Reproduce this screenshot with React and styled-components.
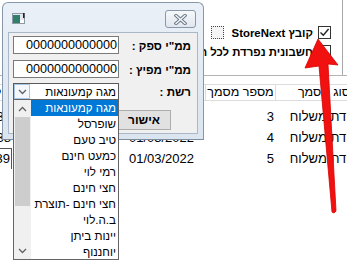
import React from 'react';
import styled, { createGlobalStyle } from 'styled-components';

const GlobalStyle = createGlobalStyle`
  html, body { margin: 0; padding: 0; background: #fff; overflow: hidden; }
  body { font-family: "Liberation Sans", Arial, sans-serif; color: #000; }
`;

const Desktop = styled.div`
  position: relative;
  width: 347px;
  height: 264px;
  overflow: hidden;
  background: #fff;
`;

/* ---------- background window ---------- */
const BgWindow = styled.div`
  direction: rtl;
  width: 347px;
  height: 264px;
`;

const TopArea = styled.div`
  height: 75px;
  border-bottom: 1px solid #b4b4b4;
`;

const OptionsPanel = styled.div`
  box-sizing: border-box;
  height: 75px;
  margin-right: 4px;
  border-right: 1px solid #a8a8a8;
  padding: 26px 11px 0 0;
  display: flex;
  flex-direction: column;
  gap: 6px;
`;

const CheckRow = styled.div`
  display: flex;
  align-items: center;
  height: 13px;
  white-space: nowrap;
`;

const CheckBox = styled.div`
  box-sizing: border-box;
  width: 13px;
  height: 13px;
  flex: none;
  border: 1px ${p => (p.$dotted ? 'dotted #444' : 'solid #333')};
  background: ${p => (p.$dotted ? '#f4f4f4' : '#fff')};
  display: flex;
  align-items: center;
  justify-content: center;
`;

const CheckLabel = styled.span`
  font-weight: bold;
  font-size: 11.4px;
  margin-right: 5px;
  margin-left: 8px;
`;

const Table = styled.div`
  width: 400px;
  margin-top: 8px;
  margin-right: -25px;
  font-size: 13px;
`;

const Grid = styled.div`
  display: grid;
  grid-template-columns: 97px 70px 193px 40px;
`;

const HeadRow = styled(Grid)`
  height: 17px;
  border-top: 1px solid #dcdcdc;
  border-bottom: 1px solid #dcdcdc;
  box-sizing: border-box;
`;

const HeadCell = styled.div`
  text-align: center;
  line-height: 15px;
  font-size: 12.5px;
  border-left: 1px solid #dcdcdc;
  white-space: nowrap;
  overflow: hidden;
`;

const Body = styled.div`
  margin-top: 5px;
`;

const Row = styled(Grid)`
  height: 21px;
`;

const Cell = styled.div`
  box-sizing: border-box;
  padding-right: ${p => p.$pad || 2}px;
  white-space: nowrap;
  overflow: hidden;
  border-top: ${p => (p.$focus ? '1px solid #555' : 'none')};
  border-right: ${p => (p.$focus ? '1px solid #555' : 'none')};
  line-height: ${p => (p.$focus ? '20px' : '21px')};
`;

/* ---------- dialog ---------- */
const Dialog = styled.div`
  position: absolute;
  left: 2px;
  top: 2px;
  width: 202px;
  height: 138px;
  box-sizing: border-box;
  border: 1px solid #8797aa;
  border-bottom-color: #7d8da0;
  border-radius: 6px 6px 0 0;
  background: linear-gradient(#eaf0f7, #dbe5f0);
  display: flex;
  flex-direction: column;
`;

const TitleBar = styled.div`
  height: 29px;
  box-sizing: border-box;
  padding: 7px 7px 0 9px;
  display: flex;
  justify-content: space-between;
  align-items: flex-start;
`;

const AppIcon = styled.svg`
  margin-top: 3px;
`;

const CloseButton = styled.div`
  box-sizing: border-box;
  width: 31px;
  height: 18px;
  border: 1px solid #8a97a9;
  border-radius: 3px;
  background: linear-gradient(#f6f8fb, #e0e7ef);
  display: flex;
  align-items: center;
  justify-content: center;
`;

const Client = styled.div`
  box-sizing: border-box;
  height: 102px;
  margin: 0 5px;
  border: 1px solid #a9b7c8;
  background: #f0f0f0;
  direction: rtl;
  padding: 3px 6px 0 4px;
`;

const FieldRow = styled.div`
  display: flex;
  align-items: center;
  justify-content: space-between;
  margin-top: ${p => p.$mt}px;
`;

const FieldLabel = styled.span`
  font-weight: bold;
  font-size: 11.6px;
  white-space: nowrap;
`;

const TextBox = styled.div`
  box-sizing: border-box;
  width: 106px;
  height: 18px;
  border: 1px solid #7a7a7a;
  background: #fff;
  font-size: 12.6px;
  line-height: 16px;
  padding-right: 1px;
  text-align: right;
  direction: ltr;
`;

const ComboWrap = styled.div`
  position: relative;
  width: 106px;
`;

const Combo = styled.div`
  box-sizing: border-box;
  height: 17px;
  border: 1px solid #5a5a5a;
  background: #fff;
  display: flex;
  align-items: center;
  justify-content: space-between;
  font-size: 11.6px;
  padding-right: 2px;
  white-space: nowrap;
`;

const ComboArrow = styled.div`
  box-sizing: border-box;
  width: 16px;
  height: 15px;
  flex: none;
  border: 1px solid #a8c6e6;
  background: #f4f8fc;
  display: flex;
  align-items: center;
  justify-content: center;
`;

const DropList = styled.div`
  position: absolute;
  top: calc(100% - 1px);
  left: 0;
  z-index: 5;
  width: 106px;
  height: 161px;
  box-sizing: border-box;
  border: 1px solid #646464;
  background: #fff;
  display: flex;
  direction: ltr;
  overflow: hidden;
`;

const ScrollBar = styled.div`
  width: 17px;
  flex: none;
  background: #f0f0f0;
  display: flex;
  flex-direction: column;
`;

const ScrollBtn = styled.div`
  height: 17px;
  flex: none;
  display: flex;
  align-items: center;
  justify-content: center;
`;

const Thumb = styled.div`
  height: 89px;
  flex: none;
  margin: 0 1px;
  background: #cdcdcd;
`;

const Track = styled.div`
  flex: 1;
`;

const Items = styled.div`
  flex: 1;
  min-width: 0;
  direction: rtl;
  overflow: hidden;
`;

const Item = styled.div`
  height: 16px;
  line-height: 16px;
  font-size: 11.6px;
  padding-right: 2px;
  white-space: nowrap;
  background: ${p => (p.$selected ? '#0078d7' : 'transparent')};
  color: ${p => (p.$selected ? '#fff' : '#000')};
`;

const ButtonRow = styled.div`
  display: flex;
  margin-top: 10px;
  padding-right: 20px;
`;

const OkButton = styled.div`
  box-sizing: border-box;
  width: 54px;
  height: 20px;
  border: 1px solid #adadad;
  background: #e1e1e1;
  font-weight: bold;
  font-size: 12px;
  line-height: 18px;
  text-align: center;
`;

const ArrowOverlay = styled.svg`
  position: absolute;
  left: 0;
  top: 0;
  z-index: 10;
  pointer-events: none;
`;

const Chevron = ({ up }) => (
  <svg width="9" height="6" viewBox="0 0 9 6">
    <path
      d={up ? 'M1 5 L4.5 1.5 L8 5' : 'M1 1 L4.5 4.5 L8 1'}
      fill="none"
      stroke="#606060"
      strokeWidth="1.3"
    />
  </svg>
);

const Check = () => (
  <svg width="11" height="11" viewBox="0 0 11 11">
    <path d="M1.5 5.5 L4.3 8.3 L9.6 2" fill="none" stroke="#222" strokeWidth="1.4" />
  </svg>
);

const rows = [
  { type: 'תעודת משלוח', num: '3', date: '01/03/2022', extra: '37' },
  { type: 'תעודת משלוח', num: '4', date: '01/03/2022', extra: '38' },
  { type: 'תעודת משלוח', num: '5', date: '01/03/2022', extra: '39', focus: true },
];

const chains = [
  'מגה קמעונאות',
  'שופרסל',
  'טיב טעם',
  'כמעט חינם',
  'רמי לוי',
  'חצי חינם',
  'חצי חינם -תוצרת',
  'ב.ה.לוי',
  'יינות  ביתן',
  'יוחננוף',
];

export default function App() {
  return (
    <Desktop>
      <GlobalStyle />
      <BgWindow>
        <TopArea>
          <OptionsPanel>
            <CheckRow>
              <CheckBox><Check /></CheckBox>
              <CheckLabel>קובץ StoreNext</CheckLabel>
              <CheckBox $dotted />
            </CheckRow>
            <CheckRow>
              <CheckBox />
              <CheckLabel>חשבונית נפרדת לכל תעודה</CheckLabel>
            </CheckRow>
          </OptionsPanel>
        </TopArea>
        <Table>
          <HeadRow>
            <HeadCell>סוג מסמך</HeadCell>
            <HeadCell>מספר מסמך</HeadCell>
            <HeadCell>תאריך</HeadCell>
            <HeadCell>קוד</HeadCell>
          </HeadRow>
          <Body>
            {rows.map(r => (
              <Row key={r.num}>
                <Cell $pad={6}>{r.type}</Cell>
                <Cell $pad={1}>{r.num}</Cell>
                <Cell $pad={11}>{r.date}</Cell>
                <Cell $pad={1} $focus={r.focus}>{r.extra}</Cell>
              </Row>
            ))}
          </Body>
        </Table>
      </BgWindow>

      <Dialog>
        <TitleBar>
          <AppIcon width="14" height="11" viewBox="0 0 14 11">
            <rect x="0.5" y="0.5" width="12" height="10" fill="#e4e8ec" stroke="#8e99a4" />
            <rect x="1" y="2" width="7" height="8" fill="#2f7f6b" />
            <rect x="8" y="7" width="4" height="3" fill="#fff" />
            <rect x="11" y="0" width="1.5" height="5" fill="#222" />
          </AppIcon>
          <CloseButton>
            <svg width="13" height="11" viewBox="0 0 13 11">
              <path d="M2 1.5 L11 9.5 M11 1.5 L2 9.5" stroke="#6f7a88" strokeWidth="3.4" strokeLinecap="square" />
              <path d="M2 1.5 L11 9.5 M11 1.5 L2 9.5" stroke="#f4f6f9" strokeWidth="1.4" strokeLinecap="square" />
            </svg>
          </CloseButton>
        </TitleBar>
        <Client>
          <FieldRow $mt={0}>
            <FieldLabel>ממ"י ספק :</FieldLabel>
            <TextBox>0000000000000</TextBox>
          </FieldRow>
          <FieldRow $mt={6}>
            <FieldLabel>ממ"י מפיץ :</FieldLabel>
            <TextBox>0000000000000</TextBox>
          </FieldRow>
          <FieldRow $mt={5}>
            <FieldLabel>רשת :</FieldLabel>
            <ComboWrap>
              <Combo>
                <span>מגה קמעונאות</span>
                <ComboArrow><Chevron /></ComboArrow>
              </Combo>
              <DropList>
                <ScrollBar>
                  <ScrollBtn><Chevron up /></ScrollBtn>
                  <Thumb />
                  <Track />
                  <ScrollBtn><Chevron /></ScrollBtn>
                </ScrollBar>
                <Items>
                  {chains.map((c, i) => (
                    <Item key={c} $selected={i === 0}>{c}</Item>
                  ))}
                </Items>
              </DropList>
            </ComboWrap>
          </FieldRow>
          <ButtonRow>
            <OkButton>אישור</OkButton>
          </ButtonRow>
        </Client>
      </Dialog>

      <ArrowOverlay width="347" height="264" viewBox="0 0 347 264">
        <polygon
          points="318,39 338,65 328,64 336,211 334,213 332,212 319,66 305,68"
          fill="#f21111"
          stroke="#d80000"
          strokeWidth="0.8"
          strokeLinejoin="round"
        />
      </ArrowOverlay>
    </Desktop>
  );
}
